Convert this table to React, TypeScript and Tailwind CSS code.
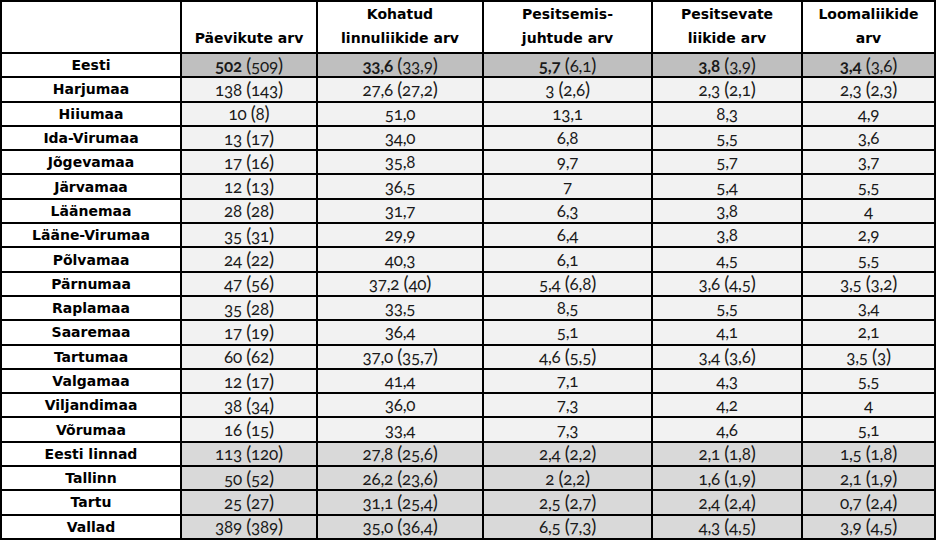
// App.tsx
const rows: { name: string; cells: string[]; tone: 'top' | 'county' | 'city' }[] = [
  { name: 'Eesti', cells: ['502 (509)', '33,6 (33,9)', '5,7 (6,1)', '3,8 (3,9)', '3,4 (3,6)'], tone: 'top' },
  { name: 'Harjumaa', cells: ['138 (143)', '27,6 (27,2)', '3 (2,6)', '2,3 (2,1)', '2,3 (2,3)'], tone: 'county' },
  { name: 'Hiiumaa', cells: ['10 (8)', '51,0', '13,1', '8,3', '4,9'], tone: 'county' },
  { name: 'Ida-Virumaa', cells: ['13 (17)', '34,0', '6,8', '5,5', '3,6'], tone: 'county' },
  { name: 'Jõgevamaa', cells: ['17 (16)', '35,8', '9,7', '5,7', '3,7'], tone: 'county' },
  { name: 'Järvamaa', cells: ['12 (13)', '36,5', '7', '5,4', '5,5'], tone: 'county' },
  { name: 'Läänemaa', cells: ['28 (28)', '31,7', '6,3', '3,8', '4'], tone: 'county' },
  { name: 'Lääne-Virumaa', cells: ['35 (31)', '29,9', '6,4', '3,8', '2,9'], tone: 'county' },
  { name: 'Põlvamaa', cells: ['24 (22)', '40,3', '6,1', '4,5', '5,5'], tone: 'county' },
  { name: 'Pärnumaa', cells: ['47 (56)', '37,2 (40)', '5,4 (6,8)', '3,6 (4,5)', '3,5 (3,2)'], tone: 'county' },
  { name: 'Raplamaa', cells: ['35 (28)', '33,5', '8,5', '5,5', '3,4'], tone: 'county' },
  { name: 'Saaremaa', cells: ['17 (19)', '36,4', '5,1', '4,1', '2,1'], tone: 'county' },
  { name: 'Tartumaa', cells: ['60 (62)', '37,0 (35,7)', '4,6 (5,5)', '3,4 (3,6)', '3,5 (3)'], tone: 'county' },
  { name: 'Valgamaa', cells: ['12 (17)', '41,4', '7,1', '4,3', '5,5'], tone: 'county' },
  { name: 'Viljandimaa', cells: ['38 (34)', '36,0', '7,3', '4,2', '4'], tone: 'county' },
  { name: 'Võrumaa', cells: ['16 (15)', '33,4', '7,3', '4,6', '5,1'], tone: 'county' },
  { name: 'Eesti linnad', cells: ['113 (120)', '27,8 (25,6)', '2,4 (2,2)', '2,1 (1,8)', '1,5 (1,8)'], tone: 'city' },
  { name: 'Tallinn', cells: ['50 (52)', '26,2 (23,6)', '2 (2,2)', '1,6 (1,9)', '2,1 (1,9)'], tone: 'city' },
  { name: 'Tartu', cells: ['25 (27)', '31,1 (25,4)', '2,5 (2,7)', '2,4 (2,4)', '0,7 (2,4)'], tone: 'city' },
  { name: 'Vallad', cells: ['389 (389)', '35,0 (36,4)', '6,5 (7,3)', '4,3 (4,5)', '3,9 (4,5)'], tone: 'city' },
]

const headers = [
  ['Päevikute arv'],
  ['Kohatud', 'linnuliikide arv'],
  ['Pesitsemis-', 'juhtude arv'],
  ['Pesitsevate', 'liikide arv'],
  ['Loomaliikide', 'arv'],
]

const widths = ['w-[180px]', 'w-[136px]', 'w-[166px]', 'w-[169px]', 'w-[150px]', 'w-[133px]']

const label = "font-['DejaVu_Sans',sans-serif] font-bold text-[14px] text-black"
const data = "font-['Lato',sans-serif] text-[17px] tracking-[-0.2px] text-[#1a1a1a] [font-variant-numeric:oldstyle-nums]"

const toneBg = {
  top: 'bg-[#bfbfbf]',
  county: 'bg-[#f2f2f2]',
  city: 'bg-[#d9d9d9]',
}

// Candara-style parentheses sit taller than the old-style digits
function Paren({ text }: { text: string }) {
  return (
    <span>
      <span className="text-[19px] leading-none">(</span>
      {text}
      <span className="text-[19px] leading-none">)</span>
    </span>
  )
}

function Value({ text, bold }: { text: string; bold: boolean }) {
  const i = text.indexOf(' (')
  if (i < 0) return <span className={bold ? 'font-bold' : ''}>{text}</span>
  return (
    <>
      <span className={bold ? 'font-bold' : ''}>{text.slice(0, i)}</span>{' '}
      <Paren text={text.slice(i + 2, -1)} />
    </>
  )
}

export default function App() {
  return (
    <div className="bg-white w-[938px] h-[542px]">
      <table className="border-collapse table-fixed w-[934px] border-2 border-black">
        <colgroup>
          {widths.map((w) => (
            <col key={w} className={w} />
          ))}
        </colgroup>
        <thead>
          <tr className="h-[51px]">
            <th className="border-2 border-black bg-white" />
            {headers.map((h) => (
              <th
                key={h.join()}
                className={`border-2 border-black bg-white align-bottom text-center leading-[24px] pb-[2px] ${label}`}
              >
                {h.map((line) => (
                  <div key={line}>{line}</div>
                ))}
              </th>
            ))}
          </tr>
        </thead>
        <tbody>
          {rows.map((r) => (
            <tr key={r.name} className="h-[24.3px]">
              <td className={`border-2 border-black bg-white text-center leading-[20px] p-0 ${label}`}>
                {r.name}
              </td>
              {r.cells.map((c, i) => (
                <td
                  key={i}
                  className={`border-2 border-black text-center leading-[20px] p-0 ${toneBg[r.tone]} ${data}`}
                >
                  <Value text={c} bold={r.tone === 'top'} />
                </td>
              ))}
            </tr>
          ))}
        </tbody>
      </table>
    </div>
  )
}
